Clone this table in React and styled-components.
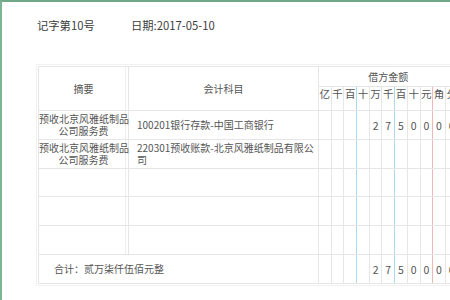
import React from "react";
import styled, { createGlobalStyle } from "styled-components";

const Global = createGlobalStyle`
  html, body { margin: 0; padding: 0; background: #fff; overflow: hidden; }
  body { font-family: "Noto Sans CJK SC", "Noto Sans", sans-serif; }
`;

const Frame = styled.div`
  width: 448px;
  height: 298px;
  border-top: 2px solid #6fa98a;
  border-left: 2px solid #7ab596;
  padding: 13px 0 0 35px;
  box-sizing: content-box;
  overflow: hidden;
`;

const VoucherHead = styled.div`
  display: flex;
  height: 20px;
  line-height: 20px;
  font-size: 11.3px;
  color: #3c3c3c;
`;

const HeadItem = styled.span`
  min-width: ${(p) => p.$w || 0}px;
`;

const TableWrap = styled.div`
  margin: 29px 0 0 -1px;
  border: 1px solid #f1f1f1;
  padding: 1px;
  width: 600px;
`;

const Table = styled.table`
  border-collapse: collapse;
  table-layout: fixed;
  width: 560px;
  font-size: 10px;
  color: #555;
  border: 1px solid #e4e4e4;
`;

const Cell = styled.td`
  border: 1px solid #e6e6e6;
  padding: 0;
  height: ${(p) => p.$h || 28}px;
  text-align: ${(p) => p.$align || "center"};
  vertical-align: middle;
  line-height: 12px;
  ${(p) => (p.$pl ? `padding-left: ${p.$pl}px;` : "")}
  ${(p) => (p.$double ? "box-shadow: inset -2px 0 0 #fff, inset -3px 0 0 #eee;" : "")}
`;

const HeadCell = styled(Cell).attrs({ as: "th" })`
  font-weight: normal;
  color: #555;
`;

const DigitHead = styled.th`
  font-weight: normal;
  color: #555;
  font-size: 10.5px;
  padding: 1px 0 0;
  height: 22px;
  vertical-align: top;
  line-height: 12px;
  text-align: center;
  border-top: 1px solid #e6e6e6;
  border-bottom: 1px solid #e6e6e6;
  border-left: none;
  border-right: 1px solid ${(p) => p.$line};
`;

const DigitCell = styled.td`
  padding: 0;
  font-size: 10.5px;
  color: #555;
  text-align: center;
  vertical-align: middle;
  border-top: 1px solid #e6e6e6;
  border-bottom: 1px solid #e6e6e6;
  border-left: none;
  border-right: 1px solid ${(p) => p.$line};
`;

const Lines = styled.span`
  display: block;
  white-space: nowrap;
`;

const units = ["亿", "千", "百", "十", "万", "千", "百", "十", "元", "角", "分"];

const lineColor = (i) => {
  if (i === 2 || i === 5) return "#a9dbee";
  if (i === 8) return "#efb7b7";
  return "#e6e6e6";
};

const allCols = [...units, ...units];
const colLine = (i) => lineColor(i % 11);

const digitsFor = (amount) => {
  const arr = Array(11).fill("");
  if (!amount) return arr;
  const s = String(amount);
  for (let k = 0; k < s.length; k++) arr[11 - s.length + k] = s[k];
  return arr;
};

const rows = [
  { summary: ["预收北京风雅纸制品", "公司服务费"], account: ["100201银行存款-中国工商银行"], debit: "2750000", h: 28 },
  { summary: ["预收北京风雅纸制品", "公司服务费"], account: ["220301预收账款-北京风雅纸制品有限公", "司"], debit: "", credit: "2750000", h: 28 },
  { summary: [], account: [], h: 27 },
  { summary: [], account: [], h: 28 },
  { summary: [], account: [], h: 28 },
];

const DigitRow = ({ debit, credit }) => {
  const d = [...digitsFor(debit), ...digitsFor(credit)];
  return d.map((v, i) => (
    <DigitCell key={i} $line={colLine(i)}>
      {v}
    </DigitCell>
  ));
};

export default function App() {
  return (
    <>
      <Global />
      <Frame>
        <VoucherHead>
          <HeadItem $w={94}>记字第10号</HeadItem>
          <HeadItem>日期:2017-05-10</HeadItem>
        </VoucherHead>
        <TableWrap>
          <Table>
            <colgroup>
              <col style={{ width: 90 }} />
              <col style={{ width: 190 }} />
              {allCols.map((_, i) => (
                <col key={i} style={{ width: 12.7 }} />
              ))}
            </colgroup>
            <thead>
              <tr>
                <HeadCell rowSpan={2} $h={43} $double>
                  摘要
                </HeadCell>
                <HeadCell rowSpan={2} $h={43}>
                  会计科目
                </HeadCell>
                <HeadCell colSpan={11} $h={19}>
                  借方金额
                </HeadCell>
                <HeadCell colSpan={11} $h={19}>
                  贷方金额
                </HeadCell>
              </tr>
              <tr>
                {allCols.map((u, i) => (
                  <DigitHead key={i} $line={colLine(i)}>
                    {u}
                  </DigitHead>
                ))}
              </tr>
            </thead>
            <tbody>
              {rows.map((r, idx) => (
                <tr key={idx}>
                  <Cell $h={r.h} $double>
                    {r.summary.map((l, k) => (
                      <Lines key={k}>{l}</Lines>
                    ))}
                  </Cell>
                  <Cell $h={r.h} $align="left" $pl={8}>
                    {r.account.map((l, k) => (
                      <Lines key={k}>{l}</Lines>
                    ))}
                  </Cell>
                  <DigitRow debit={r.debit} credit={r.credit} />
                </tr>
              ))}
              <tr>
                <Cell colSpan={2} $h={28} $align="left" $pl={15}>
                  合计：贰万柒仟伍佰元整
                </Cell>
                <DigitRow debit="2750000" credit="2750000" />
              </tr>
            </tbody>
          </Table>
        </TableWrap>
      </Frame>
    </>
  );
}
